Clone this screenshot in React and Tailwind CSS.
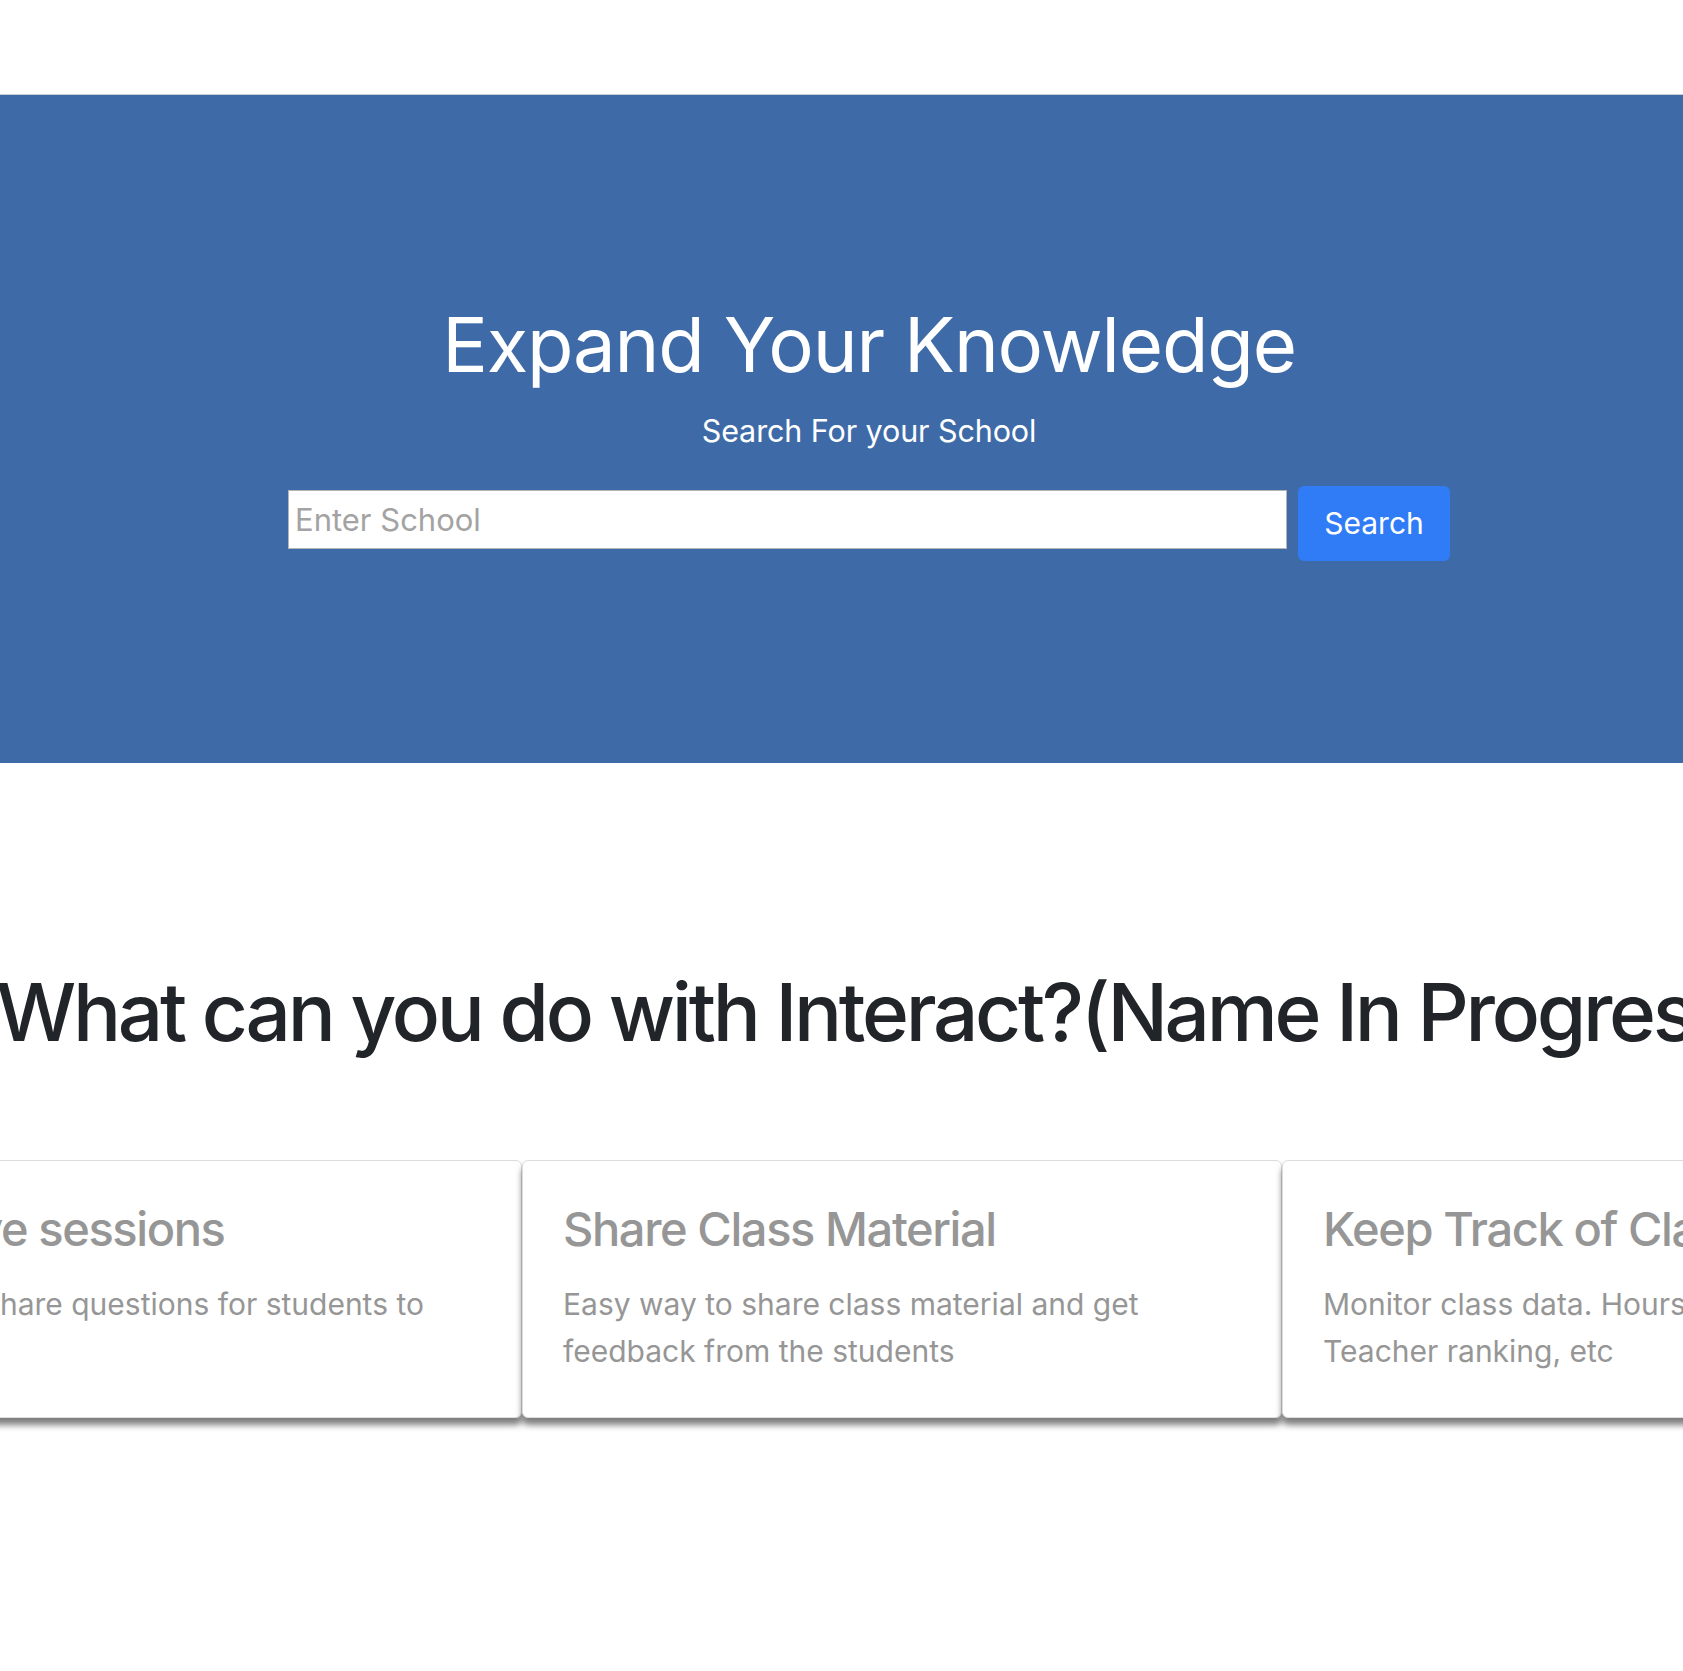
export default function App() {
  const font = { fontFamily: 'Inter, "Noto Sans", sans-serif' };
  return (
    <div className="w-full min-h-[1671px] bg-white overflow-hidden" style={font}>
      <div className="h-[94px]" />
      <section className="h-[669px] border-t border-[#c9ced6] bg-[#3e6ba7]">
        <div className="w-[1738px] flex flex-col items-center pt-[204px]">
          <h1 className="text-[76px] leading-[1.2] font-normal text-white tracking-[-1.2px]">
            Expand Your Knowledge
          </h1>
          <p className="mt-[21px] text-[30.5px] leading-[40px] text-white tracking-[-0.1px]">Search For your School</p>
          <div className="mt-[35px] flex items-start gap-[11px]">
            <input
              type="text"
              placeholder="Enter School"
              className="mt-[4px] w-[999px] h-[59px] bg-white border border-[#b5b5b5] px-[6px] text-[31px] text-[#333] placeholder:text-[#a3a3a3] outline-none"
            />
            <button className="w-[152px] h-[75px] rounded-[6px] bg-[#2f7cf6] text-white text-[30px]">
              Search
            </button>
          </div>
        </div>
      </section>
      <h2 className="mt-[201px] ml-[-4px] whitespace-nowrap text-[80px] leading-[1.2] font-medium text-[#212529] tracking-[-3.3px]">
        What can you do with Interact?(Name In Progress)
      </h2>
      <div className="mt-[100px] ml-[-238px] flex">
        {[
          ['Create live sessions', 'Prepare and share questions for students to answer'],
          ['Share Class Material', 'Easy way to share class material and get feedback from the students'],
          ['Keep Track of Class Data', 'Monitor class data. Hours spent, attendance, Teacher ranking, etc'],
        ].map(([t, d]) => (
          <div
            key={t}
            className="w-[760px] shrink-0 h-[258px] bg-white border border-[#dcdcdc] rounded-[6px] p-[40px] shadow-[0_7px_6px_rgba(0,0,0,0.5)] overflow-hidden"
          >
            <div className="text-[47px] leading-[1.2] font-medium text-[#969696] whitespace-nowrap tracking-[-1.4px]">{t}</div>
            <div className="mt-[24px] text-[30px] leading-[47px] text-[#969696]">{d}</div>
          </div>
        ))}
      </div>
    </div>
  );
}
